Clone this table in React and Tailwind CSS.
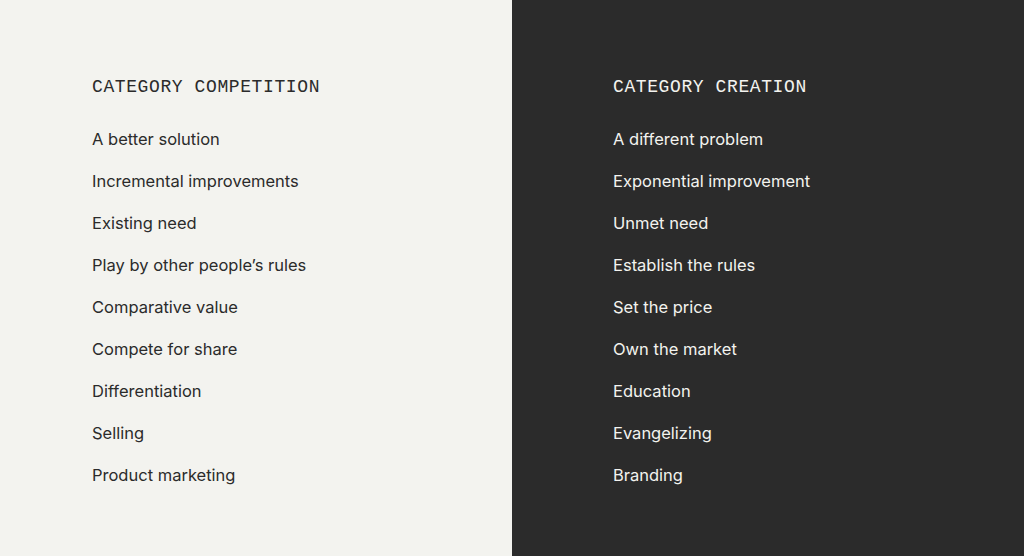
import React from 'react';

const competition = [
  'A better solution',
  'Incremental improvements',
  'Existing need',
  'Play by other people\u2019s rules',
  'Comparative value',
  'Compete for share',
  'Differentiation',
  'Selling',
  'Product marketing',
];

const creation = [
  'A different problem',
  'Exponential improvement',
  'Unmet need',
  'Establish the rules',
  'Set the price',
  'Own the market',
  'Education',
  'Evangelizing',
  'Branding',
];

function Column({ title, items, dark }) {
  return (
    <div
      className={`w-[512px] shrink-0 pt-[75px] ${
        dark ? 'bg-[#2b2b2b] text-[#f3f3ef] pl-[101px]' : 'bg-[#f3f3ef] text-[#2b2b2b] pl-[92px]'
      }`}
    >
      <h2 className="font-['Liberation_Mono',monospace] text-[18px] leading-[24px] tracking-[0.6px] font-normal mb-[19px]">
        {title}
      </h2>
      <ul>
        {items.map((item) => (
          <li key={item} className="font-['Inter',sans-serif] text-[16.5px] leading-[42px]">
            {item}
          </li>
        ))}
      </ul>
    </div>
  );
}

export default function App() {
  return (
    <div className="flex w-[1024px] h-[556px] overflow-hidden">
      <Column title="CATEGORY COMPETITION" items={competition} />
      <Column title="CATEGORY CREATION" items={creation} dark />
    </div>
  );
}
